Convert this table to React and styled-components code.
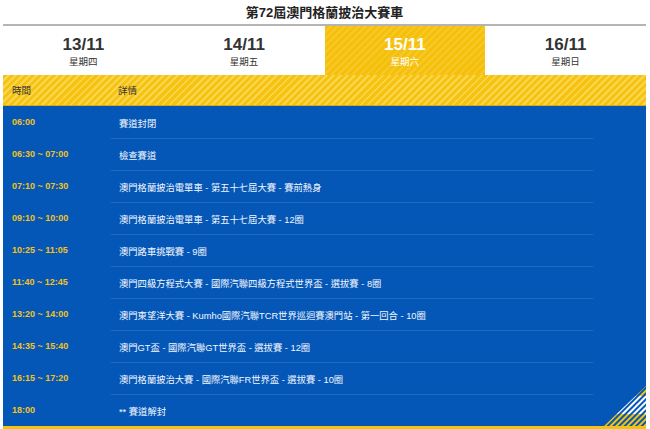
import styled, { createGlobalStyle } from "styled-components";

const GlobalStyle = createGlobalStyle`
  * { box-sizing: border-box; }
  body {
    margin: 0;
    background: #fff;
    font-family: "Liberation Sans", "Noto Sans CJK TC", sans-serif;
  }
`;

const days = [
    { date: "13/11", day: "星期四" },
    { date: "14/11", day: "星期五" },
    { date: "15/11", day: "星期六", active: true },
    { date: "16/11", day: "星期日" },
];

const schedule = [
    { time: "06:00", detail: "賽道封閉" },
    { time: "06:30 ~ 07:00", detail: "檢查賽道" },
    { time: "07:10 ~ 07:30", detail: "澳門格蘭披治電單車 - 第五十七屆大賽 - 賽前熱身" },
    { time: "09:10 ~ 10:00", detail: "澳門格蘭披治電單車 - 第五十七屆大賽 - 12圈" },
    { time: "10:25 ~ 11:05", detail: "澳門路車挑戰賽 - 9圈" },
    { time: "11:40 ~ 12:45", detail: "澳門四級方程式大賽 - 國際汽聯四級方程式世界盃 - 選拔賽 - 8圈" },
    { time: "13:20 ~ 14:00", detail: "澳門東望洋大賽 - Kumho國際汽聯TCR世界巡迴賽澳門站 - 第一回合 - 10圈" },
    { time: "14:35 ~ 15:40", detail: "澳門GT盃 - 國際汽聯GT世界盃 - 選拔賽 - 12圈" },
    { time: "16:15 ~ 17:20", detail: "澳門格蘭披治大賽 - 國際汽聯FR世界盃 - 選拔賽 - 10圈" },
    { time: "18:00", detail: "** 賽道解封" },
];

const stripes = (base, light) => `repeating-linear-gradient(135deg, ${base} 0px, ${base} 3px, ${light} 3px, ${light} 5px)`;

const Page = styled.div`
    width: 643px;
    margin-left: 3px;
`;

const Title = styled.div`
    height: 26px;
    display: flex;
    align-items: center;
    justify-content: center;
    padding-bottom: 2px;
    border-bottom: 2px solid #b4b4b4;
    font-size: 13px;
    font-weight: bold;
    color: #222;
`;

const Tabs = styled.div`
    display: grid;
    grid-template-columns: repeat(4, 1fr);
    height: 49px;
`;

const Tab = styled.div`
    display: flex;
    flex-direction: column;
    align-items: center;
    padding-top: 10px;
    color: ${(p) => (p.$active ? "#fff" : "#333")};
    background: ${(p) => (p.$active ? stripes("#f5c00c", "#f7c828") : "#fff")};
`;

const TabDate = styled.div`
    font-size: 17px;
    font-weight: bold;
    line-height: 17px;
`;

const TabDay = styled.div`
    margin-top: 4px;
    font-size: 9.5px;
    line-height: 10px;
`;

const Header = styled.div`
    display: grid;
    grid-template-columns: 108px 1fr;
    align-items: center;
    height: 31px;
    background: ${stripes("#f6c310", "#fad550")};
    border-bottom: 1px solid #d8ac10;
    font-size: 9.5px;
    color: #333;

    span:first-child { padding-left: 9px; }
    span:last-child { padding-left: 7px; }
`;

const Body = styled.div`
    position: relative;
    background: #0457b7;
    border-bottom: 3px solid #f5c20f;
`;

const Row = styled.div`
    display: grid;
    grid-template-columns: 108px 482px;
    height: 32px;
`;

const TimeCell = styled.div`
    display: flex;
    align-items: center;
    padding-left: 9px;
    font-size: 9px;
    font-weight: bold;
    color: #f4c21a;
`;

const DetailCell = styled.div`
    display: flex;
    align-items: center;
    padding-left: 8px;
    font-size: 9.3px;
    color: #f4f8ff;
    border-top: 1px solid ${(p) => (p.$first ? "transparent" : "#2369c2")};
`;

const Corner = styled.svg`
    position: absolute;
    right: 0;
    bottom: 0;
    width: 42px;
    height: 40px;
`;

const CornerMark = () => (
    <Corner viewBox="0 0 42 40">
        <defs>
            <pattern id="ys" width="4" height="4" patternUnits="userSpaceOnUse" patternTransform="rotate(45)">
                <rect width="2" height="4" fill="#f5c20f" />
            </pattern>
            <pattern id="ws" width="4" height="4" patternUnits="userSpaceOnUse" patternTransform="rotate(45)">
                <rect width="2" height="4" fill="#ffffff" />
            </pattern>
            <clipPath id="tri">
                <polygon points="0,40 42,40 42,0" />
            </clipPath>
        </defs>
        <g clipPath="url(#tri)">
            <rect x="0" y="0" width="42" height="10" fill="url(#ys)" />
            <rect x="0" y="10" width="42" height="18" fill="url(#ws)" />
            <rect x="0" y="28" width="42" height="12" fill="url(#ys)" />
        </g>
    </Corner>
);

const App = () => (
    <Page>
        <GlobalStyle />
        <Title>第72屆澳門格蘭披治大賽車</Title>
        <Tabs>
            {days.map((d) => (
                <Tab key={d.date} $active={d.active}>
                    <TabDate>{d.date}</TabDate>
                    <TabDay>{d.day}</TabDay>
                </Tab>
            ))}
        </Tabs>
        <Header>
            <span>時間</span>
            <span>詳情</span>
        </Header>
        <Body>
            {schedule.map((s, i) => (
                <Row key={s.time}>
                    <TimeCell>{s.time}</TimeCell>
                    <DetailCell $first={i === 0}>{s.detail}</DetailCell>
                </Row>
            ))}
            <CornerMark />
        </Body>
    </Page>
);

export default App;
